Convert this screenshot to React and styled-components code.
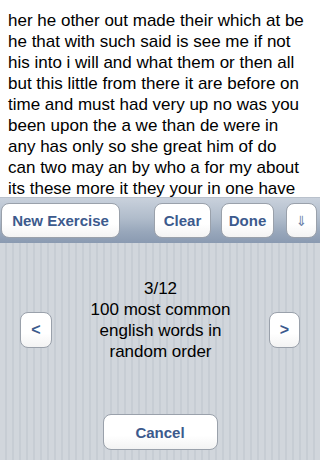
import styled, { createGlobalStyle } from "styled-components";

const GlobalStyle = createGlobalStyle`
  html, body {
    margin: 0;
    padding: 0;
    background: #ffffff;
  }
  body {
    font-family: "Liberation Sans", Arial, Helvetica, sans-serif;
    -webkit-font-smoothing: antialiased;
  }
`;

const Screen = styled.div`
  width: 320px;
  height: 460px;
  display: flex;
  flex-direction: column;
  overflow: hidden;
`;

const TextView = styled.div`
  height: 197px;
  box-sizing: border-box;
  padding: 10px 0 0 8px;
  background: #ffffff;
  color: #000000;
  font-size: 17px;
  line-height: 21px;
  white-space: nowrap;
  overflow: hidden;
`;

const Toolbar = styled.div`
  height: 46px;
  box-sizing: border-box;
  display: flex;
  align-items: center;
  padding: 0 3px 0 1px;
  background: linear-gradient(180deg, #c9d1dc 0%, #b0bccb 45%, #98a7bb 75%, #8a9ab1 100%);
  border-top: 1px solid #b9c1cc;
`;

const Spacer = styled.div`
  flex: 1;
`;

const Button = styled.button`
  box-sizing: border-box;
  width: ${(p) => p.$w}px;
  height: ${(p) => p.$h || 35}px;
  margin-left: ${(p) => p.$gap || 0}px;
  padding: 0;
  border: 1px solid #9aa1ab;
  border-radius: 8px;
  background: linear-gradient(180deg, #ffffff 0%, #ffffff 60%, #f3f3f3 100%);
  color: #3c5a8d;
  font-family: "Liberation Sans", Arial, Helvetica, sans-serif;
  font-weight: bold;
  font-size: ${(p) => p.$size || 15}px;
  display: flex;
  align-items: center;
  justify-content: center;
  cursor: pointer;
`;

const ArrowGlyph = styled.span`
  font-family: "DejaVu Sans", sans-serif;
  font-weight: normal;
  font-size: 14px;
  color: #6a81a8;
`;

const Panel = styled.div`
  flex: 1;
  box-sizing: border-box;
  display: flex;
  flex-direction: column;
  align-items: center;
  padding: 35px 20px 10px;
  background: repeating-linear-gradient(
    90deg,
    #d1d6dc 0px,
    #d1d6dc 5px,
    #c7cdd4 5px,
    #c7cdd4 7px
  );
`;

const Row = styled.div`
  width: 100%;
  display: flex;
  align-items: flex-start;
  justify-content: space-between;
`;

const NavButton = styled(Button)`
  margin-top: 34px;
  height: 36px;
`;

const Caption = styled.div`
  color: #000000;
  font-size: 17px;
  line-height: 21px;
  text-align: center;
`;

const CancelButton = styled(Button)`
  margin-top: auto;
  height: 36px;
`;

const lines = [
  "her he other out made their which at be",
  "he that with such said is see me if not",
  "his into i will and what them or then all",
  "but this little from there it are before on",
  "time and must had very up no was you",
  "been upon the a we than de were in",
  "any has only so she great him of do",
  "can two may an by who a for my about",
  "its these more it they your in one have",
];

const App = () => {
  return (
    <>
      <GlobalStyle />
      <Screen>
        <TextView>
          {lines.map((l, i) => (
            <div key={i}>{l}</div>
          ))}
        </TextView>
        <Toolbar>
          <Button $w={119}>New Exercise</Button>
          <Spacer />
          <Button $w={57}>Clear</Button>
          <Button $w={53} $gap={10}>Done</Button>
          <Button $w={31} $gap={12}>
            <ArrowGlyph>⇓</ArrowGlyph>
          </Button>
        </Toolbar>
        <Panel>
          <Row>
            <NavButton $w={32} $size={16}>&lt;</NavButton>
            <Caption>
              3/12
              <br />
              100 most common
              <br />
              english words in
              <br />
              random order
            </Caption>
            <NavButton $w={31} $size={16}>&gt;</NavButton>
          </Row>
          <CancelButton $w={115}>Cancel</CancelButton>
        </Panel>
      </Screen>
    </>
  );
};

export default App;
